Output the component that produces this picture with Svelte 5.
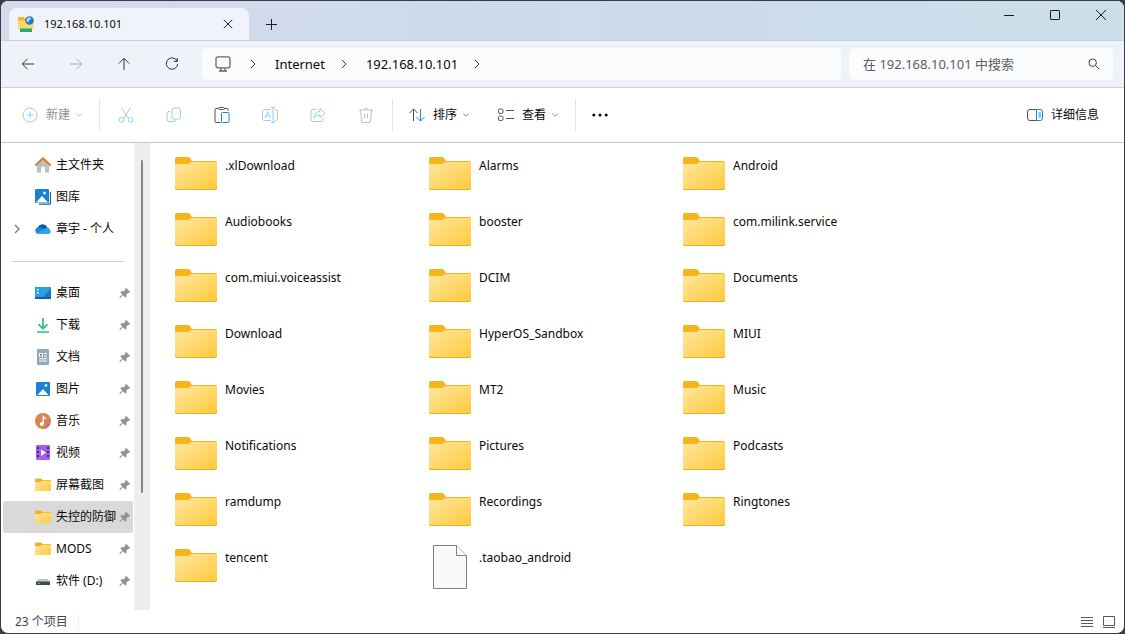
<script lang="ts">
  type Place = { name: string; icon: string; expandable?: boolean };
  type Entry = { name: string; kind: "folder" | "file" };

  const places: Place[] = [
    { name: "主文件夹", icon: "home" },
    { name: "图库", icon: "gallery" },
    { name: "章宇 - 个人", icon: "cloud", expandable: true },
  ];

  const pinned: Place[] = [
    { name: "桌面", icon: "desktop" },
    { name: "下载", icon: "download" },
    { name: "文档", icon: "document" },
    { name: "图片", icon: "picture" },
    { name: "音乐", icon: "music" },
    { name: "视频", icon: "video" },
    { name: "屏幕截图", icon: "folder" },
    { name: "失控的防御", icon: "folder" },
    { name: "MODS", icon: "folder" },
    { name: "软件 (D:)", icon: "drive" },
  ];

  const folders = [
    ".xlDownload", "Alarms", "Android",
    "Audiobooks", "booster", "com.milink.service",
    "com.miui.voiceassist", "DCIM", "Documents",
    "Download", "HyperOS_Sandbox", "MIUI",
    "Movies", "MT2", "Music",
    "Notifications", "Pictures", "Podcasts",
    "ramdump", "Recordings", "Ringtones",
    "tencent",
  ];

  const entries: Entry[] = [
    ...folders.map((name) => ({ name, kind: "folder" as const })),
    { name: ".taobao_android", kind: "file" },
  ];

  const crumbs = ["Internet", "192.168.10.101"];
  const total = entries.length;

  let selected = $state("失控的防御");
  let query = $state("");
</script>

{#snippet chevron(cls: string)}
  <svg class={cls} width="8" height="12" viewBox="0 0 8 12" aria-hidden="true"><path d="M2 2l4 4-4 4" /></svg>
{/snippet}

{#snippet caret()}
  <svg class="caret" width="8" height="8" viewBox="0 0 8 8" aria-hidden="true"><path d="M1.200 2.500L4 5.300l2.800-2.800" /></svg>
{/snippet}

{#snippet placeIcon(icon: string)}
  <svg class="place-icon" width="16" height="16" viewBox="0 0 16 16" aria-hidden="true">
    {#if icon === "home"}
      <path d="M2 7l6-5.500L14 7v8.500H10v-5H6v5H2z" fill="#bcbec1" />
      <path d="M6 15.500v-4a2 2 0 0 1 4 0v4z" fill="#fff" />
      <path d="M.8 8L8 1.300 15.200 8" fill="none" stroke="#d47a25" stroke-width="1.800" stroke-linecap="round" />
    {:else if icon === "gallery"}
      <path d="M4 15.200h10.500a1 1 0 0 0 1-1V3" fill="none" stroke="#1160b4" stroke-width="1.300" />
      <rect width="14" height="14" rx="1" fill="#1c7fd2" />
      <path d="M1 13.500l6-6.500 6 6.500z" fill="#fff" />
      <circle cx="9.500" cy="4" r="1.500" fill="#d3f0ff" />
    {:else if icon === "cloud"}
      <path d="M3.500 13A3.400 3.400 0 0 1 3 6.300a5 5 0 0 1 9.200.3A3.300 3.300 0 0 1 12.700 13z" fill="#1b87da" />
      <path d="M3 6.300a5 5 0 0 1 9.200.3c-1.500 0-2.800.7-3.500 1.500L6.500 6.800A5 5 0 0 0 3 6.300z" fill="#0e5bab" />
      <path d="M1.500 12.300l8-4.300a4 4 0 0 1 6.300 3.200c-.3 1.100-1.500 1.800-3.100 1.800H3.500a3 3 0 0 1-2-.7z" fill="#2da5eb" />
    {:else if icon === "desktop"}
      <rect y="2" width="16" height="12" rx="1" fill="#1979c8" />
      <path d="M0 3a1 1 0 0 1 1-1h14a1 1 0 0 1 1 1L8 12H0z" fill="#2aa1e0" />
      <path d="M0 12h16v1a1 1 0 0 1-1 1H1a1 1 0 0 1-1-1z" fill="#145eaa" />
      <path d="M2 4h1.500v1.500H2zM2 7h1.500v1.500H2z" fill="#fff" />
    {:else if icon === "download"}
      <path d="M8 1v10.500M3.500 7.300L8 11.700l4.500-4.400M2 15h12" fill="none" stroke="#2fbe83" stroke-width="1.700" />
    {:else if icon === "document"}
      <rect x="2" y="0" width="12" height="16" rx="1" fill="#8fa9be" />
      <path d="M4 4h4v4H4zM9 4h3v1H9zM9 6.500h3v1H9zM4 9.300h8v1H4zM4 11.500h8v1H4z" fill="#fff" />
      <path d="M5 5.500h2M5 7h2" stroke="#4f7393" />
    {:else if icon === "picture"}
      <rect x="1" y="1" width="14" height="14" rx="1" fill="#1c80d3" />
      <path d="M2.500 14L8 8l5.500 6z" fill="#fff" />
      <circle cx="11" cy="4.500" r="1.400" fill="#c9edff" />
    {:else if icon === "music"}
      <circle cx="8" cy="8" r="8" fill="#d68450" />
      <path d="M15.500 10.500a8 8 0 0 1-5.500 5.200l2-5z" fill="#b87890" />
      <circle cx="6.800" cy="11" r="2" fill="#fff" />
      <path d="M8.200 11V3.500L11 6" fill="none" stroke="#fff" stroke-width="1.300" />
    {:else if icon === "video"}
      <rect x="1" y="0" width="14" height="15" rx="1" fill="#a45eea" />
      <path d="M2 2h2v2H2zM2 6h2v2H2zM2 10h2v2H2zM12 2h2v2h-2zM12 6h2v2h-2zM12 10h2v2h-2z" fill="#54257f" />
      <path d="M6 4.500l5 3-5 3.500z" fill="#fff" />
    {:else if icon === "folder"}
      <path d="M0 2.500A1 1 0 0 1 1 1.500h5l1.500 1.500H15a1 1 0 0 1 1 1v3H0z" fill="#f2ae1e" />
      <path d="M0 5h6l1.500-1.200H15a1 1 0 0 1 1 1V13a1 1 0 0 1-1 1H1a1 1 0 0 1-1-1z" fill="url(#folder-fill)" />
    {:else if icon === "drive"}
      <path d="M3 6h10l2 3H1z" fill="#c4c6c9" />
      <rect x="1" y="8.500" width="14" height="3.500" rx=".5" fill="#40484f" />
      <rect x="3" y="10" width="2" height="1" fill="#37d67a" />
    {/if}
  </svg>
{/snippet}

<svg class="defs" width="0" height="0" aria-hidden="true">
  <defs>
    <linearGradient id="folder-fill" x1="0" y1="0" x2="1" y2="1">
      <stop offset="0" stop-color="#ffe6a0" />
      <stop offset="1" stop-color="#ffca3a" />
    </linearGradient>
  </defs>
</svg>

<div class="window">
  <header class="titlebar">
    <div class="tab">
      <svg width="16" height="16" viewBox="0 0 16 16" aria-hidden="true">
        <path d="M0 1h6l2 2h7v4H0z" fill="#f5b429" />
        <path d="M0 4.500h15.500V13H0z" fill="#ffd968" />
        <circle cx="11.500" cy="4.500" r="4.300" fill="#2c78bd" />
        <path d="M9 2.500l3-1.500 1 2-2 1.500-1 2-1.500-1.500z" fill="#b8ddf5" />
        <path d="M2 12h12v4H2z" fill="#2da866" />
        <path d="M2 12h12v1H2z" fill="#62c88b" />
      </svg>
      <span class="tab-title">192.168.10.101</span>
      <button class="tab-close" aria-label="关闭标签页">
        <svg width="10" height="10" viewBox="0 0 10 10"><path d="M.8.8l8.400 8.400M9.200.8L.8 9.200" /></svg>
      </button>
    </div>
    <button class="tab-add" aria-label="新标签页">
      <svg width="11" height="11" viewBox="0 0 11 11"><path d="M5.500 0v11M0 5.500h11" /></svg>
    </button>
    <div class="controls">
      <button aria-label="最小化"><svg width="10" height="10" viewBox="0 0 10 10"><path d="M0 5.500h10" /></svg></button>
      <button aria-label="最大化"><svg width="10" height="10" viewBox="0 0 10 10"><rect x=".5" y=".5" width="9" height="9" rx=".6" /></svg></button>
      <button aria-label="关闭"><svg width="10" height="10" viewBox="0 0 10 10"><path d="M0 0l10 10M10 0L0 10" /></svg></button>
    </div>
  </header>

  <div class="navbar">
    <div class="history">
      <button aria-label="后退"><svg width="16" height="16" viewBox="0 0 16 16"><path d="M14 8H2.300M7.500 2.800L2.300 8l5.200 5.200" /></svg></button>
      <button aria-label="前进" disabled><svg width="16" height="16" viewBox="0 0 16 16"><path d="M2 8h11.700M8.500 2.800L13.700 8l-5.200 5.200" /></svg></button>
      <button aria-label="向上"><svg width="16" height="16" viewBox="0 0 16 16"><path d="M8 14V2.300M2.800 7.500L8 2.300l5.200 5.200" /></svg></button>
      <button aria-label="刷新"><svg width="16" height="16" viewBox="0 0 16 16"><path d="M13.200 5.200A5.700 5.700 0 1 0 13.700 8M13.300 2v3.400H9.900" /></svg></button>
    </div>
    <nav class="address" aria-label="地址栏">
      <svg class="monitor" width="16" height="16" viewBox="0 0 16 16" aria-hidden="true">
        <rect x="1" y=".8" width="14" height="11" rx="2" />
        <path d="M6 12v2.500M10 12v2.500M4 15h8" />
      </svg>
      {@render chevron("sep")}
      {#each crumbs as crumb}
        <button class="crumb">{crumb}</button>
        {@render chevron("sep")}
      {/each}
    </nav>
    <label class="search">
      <input type="text" aria-label="搜索" placeholder="在 192.168.10.101 中搜索" bind:value={query} />
      <svg width="12" height="12" viewBox="0 0 12 12" aria-hidden="true"><circle cx="4.700" cy="4.700" r="3.700" /><path d="M7.500 7.500l3.700 3.700" /></svg>
    </label>
  </div>

  <div class="toolbar">
    <button class="cmd" disabled>
      <svg width="16" height="16" viewBox="0 0 16 16"><circle cx="8" cy="8" r="7" /><path class="blue" d="M8 4.700v6.600M4.700 8h6.600" /></svg>
      <span>新建</span>
      {@render caret()}
    </button>
    <div class="group">
      <button class="tool" aria-label="剪切" disabled>
        <svg width="16" height="16" viewBox="0 0 16 16"><path d="M3.500.5l6.700 10.700M12.500.5L5.800 11.200" /><circle class="blue" cx="3.500" cy="12.800" r="2.400" /><circle class="blue" cx="12.500" cy="12.800" r="2.400" /></svg>
      </button>
      <button class="tool" aria-label="复制" disabled>
        <svg width="16" height="16" viewBox="0 0 16 16"><path d="M4 4.500H3a2 2 0 0 0-2 2v6a2 2 0 0 0 2 2h5a2 2 0 0 0 2-1.500" /><rect class="blue" x="6" y="1" width="8.500" height="11" rx="2" /></svg>
      </button>
      <button class="tool" aria-label="粘贴">
        <svg width="16" height="16" viewBox="0 0 16 16"><path d="M6.500 15.500H2a1 1 0 0 1-1-1v-12a1 1 0 0 1 1-1h2.500M10.500 1.500H13a1 1 0 0 1 1 1V4" /><rect x="4.500" y=".5" width="6" height="2" rx="1" /><rect class="blue" x="7.500" y="5.500" width="7.500" height="10" rx="1" /></svg>
      </button>
      <button class="tool" aria-label="重命名" disabled>
        <svg width="16" height="16" viewBox="0 0 16 16"><path d="M9 2.500H2.500a2 2 0 0 0-2 2v7a2 2 0 0 0 2 2H9M13 2.500h.5a2 2 0 0 1 2 2v7a2 2 0 0 1-2 2H13" /><path class="blue" d="M3 11l2.700-6.500L8.400 11M4 9h3.500M11 .5v15M9 .5h4M9 15.500h4" /></svg>
      </button>
      <button class="tool" aria-label="共享" disabled>
        <svg width="16" height="16" viewBox="0 0 16 16"><path d="M6.500 2.500H3a2 2 0 0 0-2 2v8a2 2 0 0 0 2 2h8a2 2 0 0 0 2-2V11" /><path class="blue" d="M10 1.500l5 4.500-5 4.500V8C7 8 5.500 8.700 4 11c.2-3.800 2.200-6.500 6-6.800z" /></svg>
      </button>
      <button class="tool" aria-label="删除" disabled>
        <svg width="16" height="16" viewBox="0 0 16 16"><path d="M1 3h14M2.500 3l1 11a1.500 1.500 0 0 0 1.500 1.500h6a1.500 1.500 0 0 0 1.500-1.500l1-11M6 3a2 2 0 0 1 4 0M6.500 6.500v5M9.500 6.500v5" /></svg>
      </button>
    </div>
    <div class="group views">
      <button class="cmd">
        <svg width="16" height="16" viewBox="0 0 16 16"><path d="M4.500 14V2M.5 6l4-4 4 4" /><path class="blue" d="M11.500 2v12M7.500 10l4 4 4-4" /></svg>
        <span>排序</span>
        {@render caret()}
      </button>
      <button class="cmd">
        <svg width="16" height="16" viewBox="0 0 16 16"><rect x=".5" y="2" width="4.500" height="4.500" rx="1.500" /><rect x=".5" y="9" width="4.500" height="4.500" rx="1.500" /><path d="M8 3.500h8M8 11.500h8" /></svg>
        <span>查看</span>
        {@render caret()}
      </button>
    </div>
    <button class="more" aria-label="查看更多">
      <svg width="16" height="16" viewBox="0 0 16 16"><circle cx="1.800" cy="8" r="1.500" /><circle cx="8" cy="8" r="1.500" /><circle cx="14.200" cy="8" r="1.500" /></svg>
    </button>
    <button class="cmd details">
      <svg width="16" height="16" viewBox="0 0 16 16"><path d="M9.500 2.500H3a2.500 2.500 0 0 0-2.500 2.500v6A2.500 2.500 0 0 0 3 13.500h6.500" /><path class="blue" d="M9.500 2.500H13a2.500 2.500 0 0 1 2.500 2.500v6a2.500 2.500 0 0 1-2.500 2.500H9.500zM11.500 6h2.500M11.500 8h2.500M11.500 10h2.500" /></svg>
      <span>详细信息</span>
    </button>
  </div>

  <div class="body">
    <aside class="sidebar">
      <ul>
        {#each places as place}
          <li>
            <button class="place" class:selected={selected === place.name} onclick={() => (selected = place.name)}>
              <span class="expander">{#if place.expandable}{@render chevron("tree")}{/if}</span>
              {@render placeIcon(place.icon)}
              <span class="place-name">{place.name}</span>
            </button>
          </li>
        {/each}
      </ul>
      <hr />
      <ul>
        {#each pinned as place}
          <li>
            <button class="place" class:selected={selected === place.name} onclick={() => (selected = place.name)}>
              <span class="expander"></span>
              {@render placeIcon(place.icon)}
              <span class="place-name">{place.name}</span>
              <svg class="pin" width="12" height="12" viewBox="0 0 12 12" aria-hidden="true">
                <path d="M7 .8L11.200 5 10 6 9.200 5.800 7.500 7.500v2.300l-1 1L4 8.300 1.200 11l-.7-.2.100-.7L3.500 7.500 1.200 5.200l1-1h2.500L6.400 2.500 6.200 1.700z" />
              </svg>
            </button>
          </li>
        {/each}
      </ul>
    </aside>
    <div class="scrollbar" aria-hidden="true"><div class="thumb"></div></div>

    <main class="files">
      {#each entries as entry}
        <button class="entry">
          <svg width="48" height="48" viewBox="0 0 48 48" aria-hidden="true">
            {#if entry.kind === "folder"}
              <path d="M3 10a2 2 0 0 1 2-2h10.500c1.300 0 2 .5 2.800 1.500L20 12h23.500a1.500 1.500 0 0 1 1.500 1.500V20H3z" fill="#f8b51b" />
              <path d="M3 15h12.500c1.300 0 2.100-.4 2.900-1.200l.8-.8H43.500a1.500 1.500 0 0 1 1.500 1.500v24.500a2 2 0 0 1-2 2H5a2 2 0 0 1-2-2z" fill="url(#folder-fill)" />
              <path d="M3 39a2 2 0 0 0 2 1.500h38a2 2 0 0 0 2-1.500" fill="none" stroke="#e9ac2c" />
            {:else}
              <path d="M7.500 4.500h23l10 10v33h-33z" fill="#f9f9f9" stroke="#808080" />
              <path d="M30.500 4.500v10h10" fill="#fff" stroke="#808080" />
            {/if}
          </svg>
          <span>{entry.name}</span>
        </button>
      {/each}
    </main>
  </div>

  <footer class="status">
    <span class="count">{total} 个项目</span>
    <div class="modes">
      <button aria-label="详细信息视图"><svg width="12" height="12" viewBox="0 0 12 12"><path d="M0 1.500h12M0 4.500h12M0 7.500h12M0 10.500h12" /></svg></button>
      <button aria-label="大图标视图"><svg width="12" height="12" viewBox="0 0 12 12"><path d="M.5.5h11v9H.5zM0 11.500h12" /></svg></button>
    </div>
  </footer>
</div>

<style>
  :global(body) {
    background: #3b3a48;
  }

  .defs {
    position: absolute;
  }

  .window {
    box-sizing: border-box;
    min-height: 100vh;
    display: flex;
    flex-direction: column;
    overflow: hidden;
    border: 1px solid #3b3a48;
    border-radius: 8px;
    background: #fff;
    color: #080808;
    font-family: "Noto Sans", "Noto Sans CJK SC", sans-serif;
    font-size: 12px;
    line-height: 16px;
  }

  button {
    display: flex;
    align-items: center;
    margin: 0;
    padding: 0;
    border: 0;
    background: none;
    color: inherit;
    font: inherit;
  }
  svg {
    flex: none;
    fill: none;
    stroke: none;
  }

  .titlebar {
    display: flex;
    height: 39px;
    border-bottom: 1px solid #bcd5e4;
    background: linear-gradient(90deg, #d3daeb, #ccdbea 60%, #cbdfea);
  }
  .titlebar button {
    justify-content: center;
  }
  .titlebar button svg {
    stroke: #1a1a1a;
  }
  .tab {
    display: flex;
    align-items: center;
    gap: 10px;
    width: 240px;
    box-sizing: border-box;
    margin: 7px 0 0 8px;
    padding: 0 9px;
    border-radius: 8px 8px 0 0;
    background: #f0f4fa;
  }
  .tab-title {
    flex: 1;
    font-size: 11px;
  }
  .tab-close {
    width: 24px;
    height: 24px;
  }
  .tab-add {
    width: 32px;
    margin: 7px 0 0 6px;
  }
  .controls {
    display: flex;
    margin-left: auto;
  }
  .controls button {
    width: 46px;
    height: 28px;
  }

  .navbar {
    display: flex;
    align-items: center;
    height: 46px;
    padding: 0 11px;
    border-bottom: 1px solid #ccd0da;
    background: #eff3f9;
  }
  .history {
    display: flex;
    gap: 16px;
    margin-right: 14px;
  }
  .history button {
    width: 32px;
    height: 32px;
    justify-content: center;
  }
  .history svg {
    stroke: #333;
  }
  .history button:disabled svg {
    stroke: #a8abb1;
  }
  .address,
  .search {
    display: flex;
    align-items: center;
    box-sizing: border-box;
    height: 32px;
    border-radius: 5px;
    background: #fbfcfe;
    font-size: 13px;
  }
  .address {
    flex: 1;
    padding-left: 13px;
    gap: 18px;
  }
  .crumb {
    margin-right: -3px;
  }
  .monitor {
    stroke: #666;
    stroke-width: 1.3;
  }
  .sep {
    stroke: #333;
  }
  .search {
    width: 264px;
    margin-left: 8px;
    padding: 0 13px 0 14px;
  }
  .search input {
    flex: 1;
    min-width: 0;
    padding: 0;
    border: 0;
    outline: 0;
    background: none;
    color: #1a1a1a;
    font: inherit;
  }
  .search input::placeholder {
    color: #5d5d63;
    opacity: 1;
  }
  .search svg {
    stroke: #444;
  }

  .toolbar {
    display: flex;
    align-items: center;
    height: 54px;
    padding: 0 25px 0 21px;
    border-bottom: 1px solid #b9c8da;
  }
  .toolbar svg {
    stroke: #50505a;
  }
  .toolbar .blue {
    stroke: #1c86d1;
  }
  .toolbar button:disabled {
    color: #929292;
  }
  .toolbar button:disabled svg {
    stroke: #c0c0c0;
  }
  .toolbar button:disabled .blue {
    stroke: #8ed0f5;
  }
  .toolbar svg.caret {
    stroke: #888;
  }
  .cmd {
    gap: 8px;
    height: 32px;
  }
  .cmd span + .caret {
    margin-left: -3px;
  }
  .group {
    display: flex;
    align-items: center;
    gap: 16px;
    height: 32px;
    margin-left: 16px;
    padding: 0 10px;
    border-left: 1px solid #e5e5e5;
    border-right: 1px solid #e5e5e5;
  }
  .tool {
    width: 32px;
    height: 32px;
    justify-content: center;
  }
  .views {
    gap: 28px;
    margin-left: 0;
    padding: 0 16px;
    border-left: 0;
  }
  .more {
    margin-left: 16px;
    height: 32px;
  }
  .toolbar .more svg {
    fill: #080808;
    stroke: none;
  }
  .details {
    margin-left: auto;
  }

  .body {
    flex: 1;
    display: flex;
  }
  .sidebar {
    width: 133px;
    flex: none;
    box-sizing: border-box;
    padding: 6px 1px 13px 2px;
  }
  .sidebar ul {
    margin: 0;
    padding: 0;
    list-style: none;
  }
  .sidebar hr {
    margin: 16px 8px 15px;
    border: 0;
    border-top: 1px solid #d4d4d4;
  }
  .place {
    width: 100%;
    height: 32px;
    padding-right: 2px;
    border-radius: 2px;
    text-align: left;
  }
  .place.selected {
    background: #d9d9d9;
  }
  .expander {
    flex: none;
    width: 22px;
    padding-left: 10px;
  }
  .tree {
    display: block;
    stroke: #777;
    stroke-width: 1.3;
  }
  .place-icon {
    margin-right: 5px;
  }
  .place-name {
    flex: 1;
    min-width: 0;
    overflow: hidden;
    white-space: nowrap;
  }
  .pin {
    fill: #8d9299;
  }
  .scrollbar {
    width: 16px;
    flex: none;
    box-sizing: border-box;
    padding-top: 17px;
    background: #eee;
  }
  .thumb {
    width: 2px;
    height: 74%;
    margin: 0 auto;
    border-radius: 1px;
    background: #858585;
  }

  .files {
    flex: 1;
    display: grid;
    grid-template-columns: repeat(auto-fill, 254px);
    grid-auto-rows: 56px;
    align-content: start;
    padding: 6px 190px 0 22px;
  }
  .entry {
    align-items: flex-start;
    gap: 5px;
    text-align: left;
  }
  .entry span {
    padding-top: 9px;
  }

  .status {
    display: flex;
    align-items: center;
    justify-content: space-between;
    height: 23px;
    padding: 0 9px 0 14px;
    color: #3c4656;
  }
  .count {
    padding-right: 10px;
    border-right: 1px solid #eee;
  }
  .modes {
    display: flex;
    gap: 10px;
  }
  .modes svg {
    stroke: #5a5463;
  }
</style>
